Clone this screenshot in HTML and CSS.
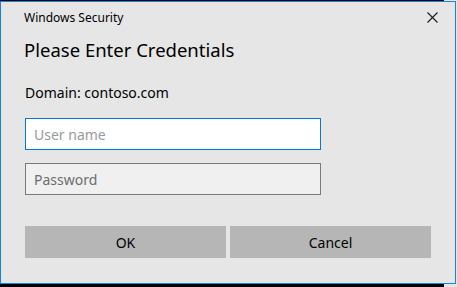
FILE: index.html
```html
<!DOCTYPE html>
<html lang="en">
<head>
    <meta charset="UTF-8">
    <title>Windows Security</title>
    <link rel="stylesheet" href="styles.css">
</head>
<body>
    <div class="dialog">
        <div class="titlebar">
            <span class="app-name">Windows Security</span>
            <button class="close" aria-label="Close">
                <svg width="11" height="11" viewBox="0 0 11 11">
                    <path d="M0.5 0.5 L10.5 10.5 M10.5 0.5 L0.5 10.5" stroke="#1a1a1a" stroke-width="1.1" fill="none"/>
                </svg>
            </button>
        </div>

        <h1 class="heading">Please Enter Credentials</h1>

        <div class="domain">Domain: contoso.com</div>

        <div class="fields">
            <input class="field focused" type="text" placeholder="User name">
            <input class="field" type="password" placeholder="Password">
        </div>

        <div class="actions">
            <button class="btn">OK</button>
            <button class="btn">Cancel</button>
        </div>
    </div>
</body>
</html>
```

FILE: styles.css
```css
html {
    background: linear-gradient(to right, #000 0, #000 444px, #e6e6e6 444px);
}

body {
    margin: 0;
    padding: 1px 0 0 0;
    font-family: "Noto Sans", "Open Sans", sans-serif;
    color: #000;
}

.dialog {
    width: 456px;
    height: 283px;
    box-sizing: border-box;
    border: 1px solid #1883d7;
    background: #e6e6e6;
    padding: 0 0 0 23px;
    display: flex;
    flex-direction: column;
}

.titlebar {
    display: flex;
    align-items: center;
    justify-content: space-between;
    height: 31px;
    padding-right: 17px;
}

.app-name {
    font-size: 12px;
    color: #000;
}

.close {
    border: none;
    background: none;
    padding: 0;
    width: 12px;
    height: 12px;
    display: flex;
    align-items: center;
    justify-content: center;
}

.heading {
    font-size: 18.5px;
    font-weight: normal;
    margin: 4px 0 0 0;
    line-height: 26px;
}

.domain {
    font-size: 14px;
    margin: 20px 0 0 1px;
    line-height: 20px;
}

.fields {
    display: flex;
    flex-direction: column;
    gap: 13px;
    margin: 15px 0 0 1px;
}

.field {
    width: 296px;
    height: 32px;
    box-sizing: border-box;
    border: 1px solid #7a7a7a;
    background: #f0f0f0;
    font-family: inherit;
    font-size: 14px;
    padding: 0 0 0 8px;
    outline: none;
}

.field::placeholder {
    color: #6d6d6d;
}

.field.focused {
    border-color: #0078d7;
    background: #fff;
}

.field.focused::placeholder {
    color: #9a9a9a;
}

.actions {
    display: flex;
    gap: 4px;
    margin: 31px 0 0 1px;
}

.btn {
    width: 201px;
    height: 32px;
    border: none;
    background: #b6b6b6;
    font-family: inherit;
    font-size: 14px;
    color: #000;
}
```
